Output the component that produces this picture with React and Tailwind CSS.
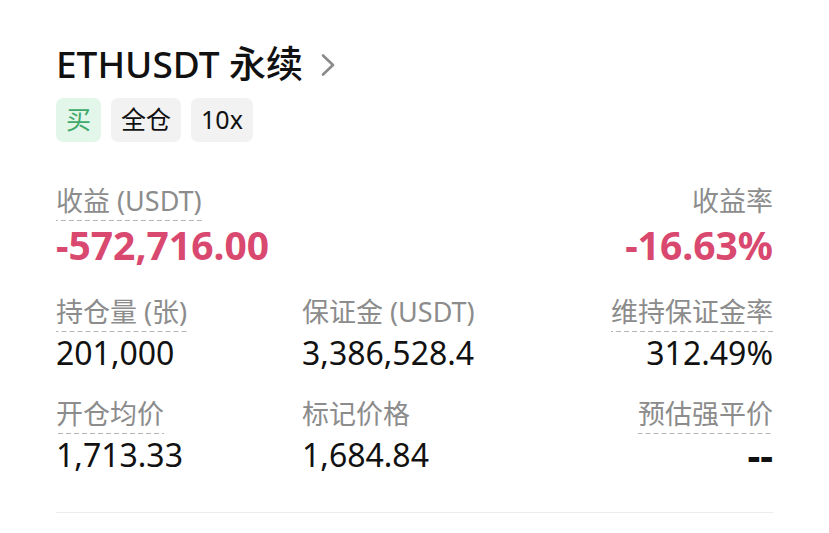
import React from "react";

const font = { fontFamily: '"Noto Sans", "Noto Sans CJK SC", sans-serif' };

function Label({ children, dashed, right }) {
  return (
    <div className={right ? "flex justify-end" : "flex"}>
      <span
        className={
          "text-[27px] leading-[32px] text-[#8c8c8c] pb-[4px] " +
          (dashed
            ? "bg-[linear-gradient(to_right,#b5b5b5_5px,transparent_5px)] bg-[length:8px_1.5px] bg-bottom bg-repeat-x"
            : "")
        }
      >
        {children}
      </span>
    </div>
  );
}

function Value({ children, right }) {
  return (
    <div className={"text-[32px] leading-[40px] text-[#111] mt-[1px] " + (right ? "text-right" : "")}>
      {children}
    </div>
  );
}

export default function App() {
  return (
    <div className="w-[829px] h-[533px] bg-white px-[56px] pt-[44px]" style={font}>
      <div className="flex items-center h-[40px]">
        <span className="text-[37px] leading-[40px] font-medium text-[#111]">ETHUSDT 永续</span>
        <svg width="16" height="24" viewBox="0 0 16 24" className="ml-[17px] mt-[2px]">
          <path d="M3 2.5 L13 12 L3 21.5" fill="none" stroke="#8a8a8a" strokeWidth="2.6" strokeLinecap="round" strokeLinejoin="round" />
        </svg>
      </div>
      <div className="flex gap-[10px] mt-[14px]">
        <span className="h-[44px] px-[10px] flex items-center rounded-[7px] bg-[#e3f6ea] text-[#3fa96b] text-[25px]">买</span>
        <span className="h-[44px] px-[10px] flex items-center rounded-[7px] bg-[#f2f2f2] text-[#111] text-[25px]">全仓</span>
        <span className="h-[44px] px-[10px] flex items-center rounded-[7px] bg-[#f2f2f2] text-[#111] text-[25px]">10x</span>
      </div>

      <div className="flex justify-between mt-[43px]">
        <div>
          <Label dashed>收益 (USDT)</Label>
          <div className="text-[39px] leading-[42px] font-bold text-[#d9486f] mt-[3px]">-572,716.00</div>
        </div>
        <div>
          <Label right>收益率</Label>
          <div className="text-[39px] leading-[42px] font-bold text-[#d9486f] text-right mt-[3px]">-16.63%</div>
        </div>
      </div>

      <div className="grid grid-cols-[246px_1fr_auto] mt-[30px]">
        <div>
          <Label dashed>持仓量 (张)</Label>
          <Value>201,000</Value>
        </div>
        <div>
          <Label>保证金 (USDT)</Label>
          <Value>3,386,528.4</Value>
        </div>
        <div>
          <Label dashed right>维持保证金率</Label>
          <Value right>312.49%</Value>
        </div>
      </div>

      <div className="grid grid-cols-[246px_1fr_auto] mt-[25px]">
        <div>
          <Label dashed>开仓均价</Label>
          <Value>1,713.33</Value>
        </div>
        <div>
          <Label>标记价格</Label>
          <Value>1,684.84</Value>
        </div>
        <div>
          <Label dashed right>预估强平价</Label>
          <div className="text-[40px] leading-[40px] font-bold text-[#111] text-right mt-[1px]">--</div>
        </div>
      </div>

      <div className="mt-[37px] h-px bg-[#ececec]" />
    </div>
  );
}
